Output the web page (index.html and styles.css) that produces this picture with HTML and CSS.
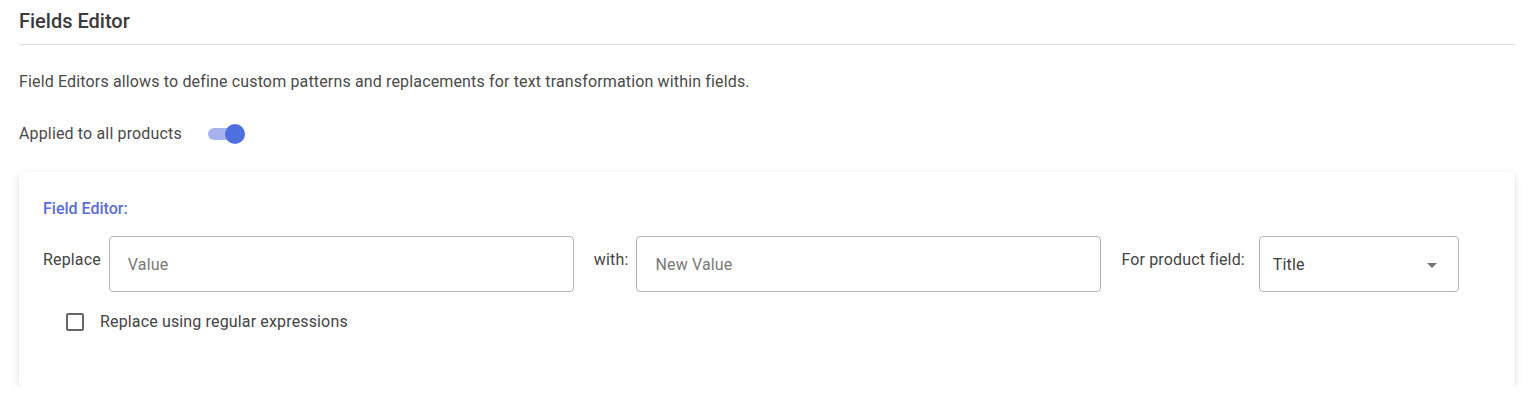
FILE: index.html
```html
<!DOCTYPE html>
<html lang="en">
<head>
<meta charset="utf-8">
<title>Fields Editor</title>
<link rel="stylesheet" href="styles.css">
</head>
<body>
<div class="page">
  <h1 class="title">Fields Editor</h1>
  <div class="divider"></div>
  <p class="desc">Field Editors allows to define custom patterns and replacements for text transformation within fields.</p>
  <div class="applied">
    <span class="applied-label">Applied to all products</span>
    <span class="switch"><span class="switch-track"></span><span class="switch-thumb"></span></span>
  </div>
  <div class="card">
    <div class="card-heading">Field Editor:</div>
    <div class="fields">
      <span class="label label-replace">Replace</span>
      <div class="input input-value"><span class="placeholder">Value</span></div>
      <span class="label label-with">with:</span>
      <div class="input input-new"><span class="placeholder">New Value</span></div>
      <span class="label label-for">For product field:</span>
      <div class="select"><span class="select-value">Title</span><span class="caret"></span></div>
    </div>
    <div class="check-row">
      <span class="checkbox"></span>
      <span class="check-label">Replace using regular expressions</span>
    </div>
  </div>
</div>
</body>
</html>
```

FILE: styles.css
```css
* { box-sizing: border-box; }
html, body { margin: 0; padding: 0; background: #ffffff; }
body {
  font-family: Roboto, "Liberation Sans", Arial, sans-serif;
  color: #444444;
}
.page {
  padding: 9px 18px 0 19px;
}
.title {
  margin: 0;
  font-size: 20px;
  line-height: 24px;
  font-weight: 500;
  color: #3b3b3b;
}
.divider {
  height: 1px;
  background: #e0e0e0;
  margin-top: 11px;
}
.desc {
  margin: 27px 0 0 0;
  font-size: 16px;
  line-height: 20px;
  letter-spacing: 0.15px;
  color: #4a4a4a;
}
.applied {
  display: flex;
  align-items: center;
  height: 24px;
  margin-top: 29px;
}
.applied-label {
  font-size: 16px;
  line-height: 20px;
  letter-spacing: 0.15px;
  color: #4a4a4a;
  margin-top: 1px;
}
.switch {
  position: relative;
  display: block;
  width: 37px;
  height: 20px;
  margin-left: 26px;
  margin-top: 2px;
}
.switch-track {
  position: absolute;
  left: 0;
  top: 4px;
  width: 34px;
  height: 12px;
  border-radius: 6px;
  background: #a6b3ee;
}
.switch-thumb {
  position: absolute;
  right: 0;
  top: 0;
  width: 20px;
  height: 20px;
  border-radius: 50%;
  background: #4e6fdf;
}
.card {
  margin-top: 27px;
  height: 214px;
  background: #ffffff;
  border-radius: 4px;
  box-shadow: 0 3px 8px rgba(0,0,0,0.10), 0 1px 3px rgba(0,0,0,0.06);
  padding: 27px 24px 0 24px;
}
.card-heading {
  font-size: 16px;
  line-height: 20px;
  font-weight: 500;
  color: #5a6de0;
}
.fields {
  display: flex;
  align-items: center;
  margin-top: 17px;
  height: 56px;
}
.label {
  font-size: 16px;
  line-height: 20px;
  letter-spacing: 0.15px;
  color: #444444;
  margin-right: 8px;
  padding-bottom: 8px;
  white-space: nowrap;
}
.label-with { margin-left: 20px; }
.label-for { margin-left: 20px; margin-right: 14px; }
.input {
  flex: none;
  width: 465px;
  height: 56px;
  border: 1px solid #b5b5b5;
  border-radius: 4px;
  display: flex;
  align-items: center;
  padding-left: 18px;
}
.placeholder {
  font-size: 16px;
  letter-spacing: 0.15px;
  color: #7a7a7a;
  margin-top: 1px;
}
.select {
  flex: none;
  width: 200px;
  height: 56px;
  border: 1px solid #b5b5b5;
  border-radius: 4px;
  display: flex;
  align-items: center;
  justify-content: space-between;
  padding: 0 21px 0 13px;
}
.select-value {
  font-size: 16px;
  letter-spacing: 0.15px;
  color: #3f3f3f;
}
.caret {
  width: 0;
  height: 0;
  border-left: 5px solid transparent;
  border-right: 5px solid transparent;
  border-top: 5px solid #757575;
  margin-top: 2px;
}
.check-row {
  display: flex;
  align-items: center;
  height: 24px;
  margin-top: 18px;
  padding-left: 23px;
}
.checkbox {
  flex: none;
  width: 18px;
  height: 18px;
  border: 2px solid #676767;
  border-radius: 2px;
  margin-right: 16px;
}
.check-label {
  font-size: 16px;
  line-height: 20px;
  letter-spacing: 0.15px;
  color: #444444;
}
```
